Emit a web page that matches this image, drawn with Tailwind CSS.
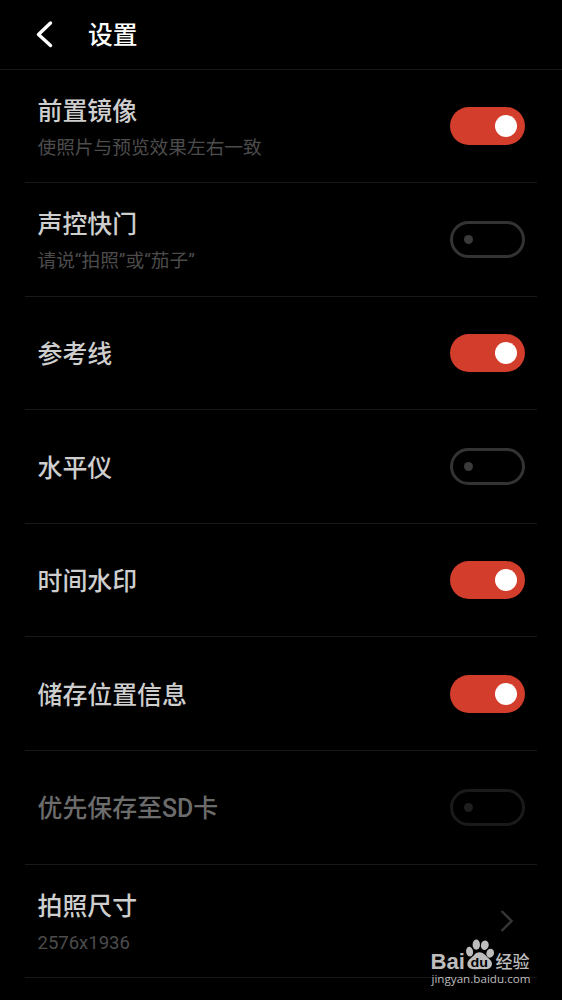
<!DOCTYPE html>
<html lang="zh-CN">

<head>
    <meta charset="UTF-8">
    <meta name="viewport" content="width=device-width, initial-scale=1.0">
    <title>设置</title>
    <script src="https://cdn.jsdelivr.net/npm/@tailwindcss/browser@4"></script>
</head>

<body class="relative h-[1000px] overflow-hidden bg-black font-[Roboto,'Noto_Sans_CJK_SC',sans-serif] text-[#cecece]">
    <!-- Header -->
    <header class="flex h-[69.5px] items-center border-b border-[#191919] pl-[35px]">
        <svg class="h-7 w-[18px]" viewBox="0 0 18 28" fill="none" stroke="#fff" stroke-width="3.4" stroke-linecap="round" stroke-linejoin="round">
            <path d="M15.5 3 L3.5 14.5 L15.5 25.5" />
        </svg>
        <h1 class="ml-[35px] pt-1 text-[24.8px] leading-8 font-medium text-white">设置</h1>
    </header>

    <!-- Settings list -->
    <main class="px-[25px]">
        <div class="flex h-[113.6px] items-center justify-between border-b border-[#191919] px-[12.5px]">
            <div class="pt-1">
                <h2 class="text-[24.9px] leading-9 font-medium">前置镜像</h2>
                <p class="mt-1 text-[18.7px] leading-7 text-[#4c4c4c]">使照片与预览效果左右一致</p>
            </div>
            <div class="flex h-[37.5px] w-[75px] items-center justify-end rounded-full bg-[#d33d2c] pr-[7.5px]">
                <span class="size-[22.5px] rounded-full bg-white"></span>
            </div>
        </div>
        <div class="flex h-[113.6px] items-center justify-between border-b border-[#191919] px-[12.5px]">
            <div class="pt-1">
                <h2 class="text-[24.9px] leading-9 font-medium">声控快门</h2>
                <p class="mt-1 text-[18.7px] leading-7 text-[#4c4c4c]">请说“拍照”或“茄子”</p>
            </div>
            <div class="flex h-[37.5px] w-[75px] items-center rounded-full border-3 border-[#333] pl-[11px]">
                <span class="size-[9.5px] rounded-full bg-[#3a3a3a]"></span>
            </div>
        </div>
        <div class="flex h-[113.6px] items-center justify-between border-b border-[#191919] px-[12.5px]">
            <h2 class="pt-1 text-[24.9px] leading-9 font-medium">参考线</h2>
            <div class="flex h-[37.5px] w-[75px] items-center justify-end rounded-full bg-[#d33d2c] pr-[7.5px]">
                <span class="size-[22.5px] rounded-full bg-white"></span>
            </div>
        </div>
        <div class="flex h-[113.6px] items-center justify-between border-b border-[#191919] px-[12.5px]">
            <h2 class="pt-1 text-[24.9px] leading-9 font-medium">水平仪</h2>
            <div class="flex h-[37.5px] w-[75px] items-center rounded-full border-3 border-[#333] pl-[11px]">
                <span class="size-[9.5px] rounded-full bg-[#3a3a3a]"></span>
            </div>
        </div>
        <div class="flex h-[113.6px] items-center justify-between border-b border-[#191919] px-[12.5px]">
            <h2 class="pt-1 text-[24.9px] leading-9 font-medium">时间水印</h2>
            <div class="flex h-[37.5px] w-[75px] items-center justify-end rounded-full bg-[#d33d2c] pr-[7.5px]">
                <span class="size-[22.5px] rounded-full bg-white"></span>
            </div>
        </div>
        <div class="flex h-[113.6px] items-center justify-between border-b border-[#191919] px-[12.5px]">
            <h2 class="pt-1 text-[24.9px] leading-9 font-medium">储存位置信息</h2>
            <div class="flex h-[37.5px] w-[75px] items-center justify-end rounded-full bg-[#d33d2c] pr-[7.5px]">
                <span class="size-[22.5px] rounded-full bg-white"></span>
            </div>
        </div>
        <div class="flex h-[113.6px] items-center justify-between border-b border-[#191919] px-[12.5px]">
            <h2 class="pt-1 text-[24.9px] leading-9 font-medium text-[#6c6c6c]">优先保存至SD卡</h2>
            <div class="flex h-[37.5px] w-[75px] items-center rounded-full border-3 border-[#1a1a1a] pl-[11px]">
                <span class="size-[9.5px] rounded-full bg-[#1e1e1e]"></span>
            </div>
        </div>
        <div class="flex h-[113.6px] items-center justify-between border-b border-[#191919] pr-[22px] pl-[12.5px]">
            <div class="pt-1">
                <h2 class="text-[24.9px] leading-9 font-medium">拍照尺寸</h2>
                <p class="mt-1 text-[18.5px] leading-7 text-[#4c4c4c]">2576x1936</p>
            </div>
            <svg class="h-6 w-4" viewBox="0 0 16 24" fill="none" stroke="#363636" stroke-width="2.4">
                <path d="M2.5 2 L12.5 12 L2.5 22" />
            </svg>
        </div>
    </main>

    <!-- Watermark -->
    <div class="absolute top-[938px] left-[430px] h-[50px] w-[104px]">
        <svg class="size-full" viewBox="0 0 104 50" fill="#bdbdbd">
            <text x="0.5" y="31" font-family="Liberation Sans" font-weight="bold" font-size="21.5" textLength="34.5" lengthAdjust="spacingAndGlyphs">Bai</text>
            <ellipse cx="39.6" cy="13.7" rx="3.5" ry="4.9" transform="rotate(-8 39.6 13.7)" />
            <ellipse cx="46.3" cy="6.7" rx="3.7" ry="5.1" />
            <ellipse cx="54.8" cy="7.2" rx="3.9" ry="4.8" transform="rotate(12 54.8 7.2)" />
            <ellipse cx="60.2" cy="15.2" rx="3.8" ry="4.5" transform="rotate(20 60.2 15.2)" />
            <path d="M49.5 14.3 C53.5 14.3 55.5 17.5 58 19.8 C61 22.4 62.7 24.6 61.7 27.6 C60 32 55.5 31.2 49.8 31 C44 31.2 39.5 32.2 37.6 27.8 C36.6 24.8 38.3 22.2 41.3 19.8 C44.3 17.4 45.5 14.3 49.5 14.3 Z" />
            <text x="40.5" y="28.6" fill="#000" font-family="Liberation Sans" font-weight="bold" font-size="12.5" textLength="17.5" lengthAdjust="spacingAndGlyphs">du</text>
            <text x="65.5" y="30" font-family="Noto Sans CJK SC" font-weight="500" font-size="16.5" textLength="34" lengthAdjust="spacingAndGlyphs">经验</text>
            <text x="1.5" y="45" font-family="Open Sans" font-size="11" font-weight="500" textLength="99" lengthAdjust="spacingAndGlyphs">jingyan.baidu.com</text>
        </svg>
    </div>
</body>

</html>
